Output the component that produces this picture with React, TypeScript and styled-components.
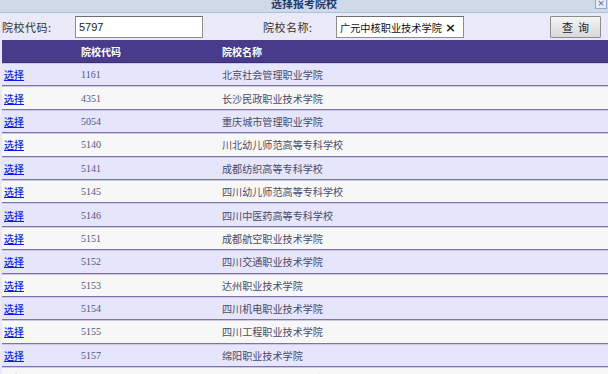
import styled, { createGlobalStyle } from "styled-components";

const GlobalStyle = createGlobalStyle`
  html, body {
    margin: 0;
    padding: 0;
    background: #e9e9f8;
    overflow: hidden;
  }
  body {
    width: 608px;
    height: 374px;
    font-family: "Liberation Serif", "Noto Sans CJK SC", serif;
  }
`;

const schools = [
  { code: "1161", name: "北京社会管理职业学院" },
  { code: "4351", name: "长沙民政职业技术学院" },
  { code: "5054", name: "重庆城市管理职业学院" },
  { code: "5140", name: "川北幼儿师范高等专科学校" },
  { code: "5141", name: "成都纺织高等专科学校" },
  { code: "5145", name: "四川幼儿师范高等专科学校" },
  { code: "5146", name: "四川中医药高等专科学校" },
  { code: "5151", name: "成都航空职业技术学院" },
  { code: "5152", name: "四川交通职业技术学院" },
  { code: "5153", name: "达州职业技术学院" },
  { code: "5154", name: "四川机电职业技术学院" },
  { code: "5155", name: "四川工程职业技术学院" },
  { code: "5157", name: "绵阳职业技术学院" },
  { code: "5158", name: "四川邮电职业技术学院" },
];

export default function App() {
  return (
    <Dialog>
      <GlobalStyle />
      <TitleBar>
        <span />
        <div className="title">选择报考院校</div>
        <CloseBox>×</CloseBox>
      </TitleBar>

      <SearchRow>
        <Label>院校代码:</Label>
        <Field>
          <span>5797</span>
        </Field>
        <Label $gap={60}>院校名称:</Label>
        <Field>
          <span className="cn">广元中核职业技术学院</span>
          <span className="clear">×</span>
        </Field>
        <div className="spacer" />
        <QueryButton>查&nbsp;&nbsp;询</QueryButton>
      </SearchRow>

      <Table>
        <HeadRow>
          <div />
          <div>院校代码</div>
          <div>院校名称</div>
        </HeadRow>
        {schools.map((s, i) => (
          <Row key={s.code} $odd={i % 2 === 1}>
            <a href="#">选择</a>
            <div className="code">{s.code}</div>
            <div className="name">{s.name}</div>
          </Row>
        ))}
      </Table>
    </Dialog>
  );
}

const Dialog = styled.div`
  width: 608px;
  height: 374px;
  overflow: hidden;
  background: #e9e9f8;
`;

const TitleBar = styled.div`
  height: 12px;
  display: grid;
  grid-template-columns: 1fr auto 1fr;
  align-items: start;
  background: #cfdae8;
  border-bottom: 1px solid #a9c3df;
  overflow: hidden;

  .title {
    font-family: "Noto Sans CJK SC", sans-serif;
    font-size: 11px;
    font-weight: 700;
    line-height: 6px;
    color: #1d3a73;
  }
`;

const CloseBox = styled.div`
  justify-self: end;
  width: 10px;
  height: 8px;
  margin-right: 1px;
  border: 1px solid #8fa9c9;
  border-top: none;
  background: #e4ecf6;
  color: #4266a0;
  font-family: "DejaVu Sans", sans-serif;
  font-size: 9px;
  line-height: 6px;
  text-align: center;
`;

const SearchRow = styled.div`
  height: 27px;
  display: flex;
  align-items: center;
  padding-left: 2px;
  padding-top: 1px;
  box-sizing: border-box;
  font-family: "Noto Sans CJK SC", sans-serif;

  .spacer {
    flex: 1;
  }
`;

const Label = styled.div<{ $gap?: number }>`
  width: 73px;
  margin-left: ${(p) => p.$gap ?? 0}px;
  font-size: 11px;
  letter-spacing: 0.5px;
  color: #333;
`;

const Field = styled.div`
  width: 128px;
  height: 22px;
  box-sizing: border-box;
  display: flex;
  align-items: center;
  justify-content: space-between;
  padding: 0 7px 0 3px;
  background: #fff;
  border: 1px solid #8d8d8d;
  border-top-color: #6e6e6e;
  font-family: "Liberation Sans", "Noto Sans CJK SC", sans-serif;
  font-size: 11px;
  color: #222;

  .cn {
    font-size: 10.2px;
    color: #111;
  }

  .clear {
    font-family: "DejaVu Sans", sans-serif;
    font-size: 13px;
    font-weight: 700;
    line-height: 1;
    color: #222;
  }
`;

const QueryButton = styled.button`
  width: 51px;
  height: 22px;
  margin: 0 7px 0 0;
  padding: 0;
  border: 1px solid #8c8c8c;
  border-radius: 1px;
  background: linear-gradient(#f4f4f4, #d9d9d9);
  font-family: "Noto Sans CJK SC", sans-serif;
  font-size: 11px;
  color: #222;
`;

const Table = styled.div`
  margin-left: 2px;
`;

const HeadRow = styled.div`
  display: grid;
  grid-template-columns: 79px 141px 1fr;
  height: 22px;
  align-items: center;
  background: #483c8a;
  border-bottom: 1px solid #3a2f72;
  color: #fff;
  font-family: "Noto Sans CJK SC", sans-serif;
  font-size: 10px;
  font-weight: 700;
`;

const Row = styled.div<{ $odd: boolean }>`
  display: grid;
  grid-template-columns: 79px 141px 1fr;
  height: 23.4px;
  box-sizing: border-box;
  align-items: center;
  background: ${(p) => (p.$odd ? "#f7f7f7" : "#e5e5fc")};
  border-top: 1px solid #cbc8e2;
  border-bottom: 1px solid #7c74b0;
  font-size: 10px;

  a {
    padding-left: 2px;
    color: #0a1ee0;
    text-decoration: underline;
    font-family: "Noto Sans CJK SC", sans-serif;
    font-size: 10px;
    font-weight: 500;
  }

  .code {
    font-family: "Liberation Serif", serif;
    color: #55557c;
  }

  .name {
    font-family: "Noto Sans CJK SC", sans-serif;
    color: #4b4b66;
    font-size: 10.1px;
  }
`;
